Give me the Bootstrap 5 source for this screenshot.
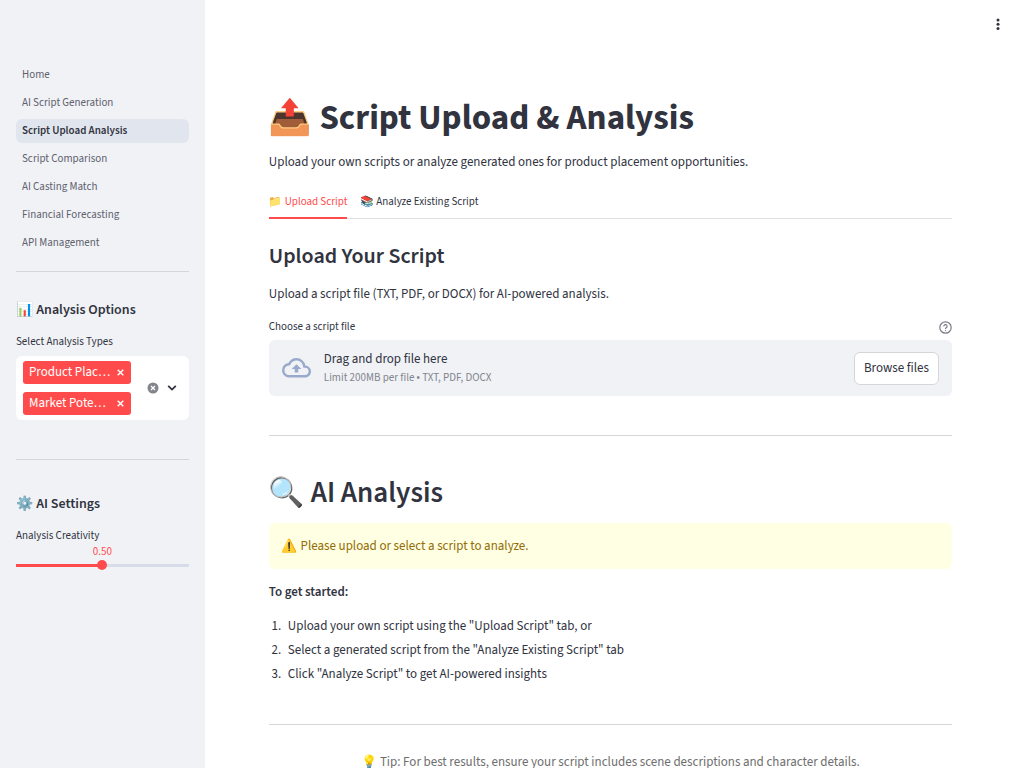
<!DOCTYPE html>
<html lang="en">
<head>
<meta charset="utf-8">
<meta name="viewport" content="width=device-width, initial-scale=1">
<title>Script Upload Analysis</title>
<link href="https://cdn.jsdelivr.net/npm/bootstrap@5.3.0/dist/css/bootstrap.min.css" rel="stylesheet">
<style>
  :root { --ink: #31333f; --red: #ff4b4b; --panel: #f0f2f6; --rule: #d6d6d9; }
  body { font-family: "Source Sans Pro", "Source Sans 3", "Noto Sans CJK SC", "Noto Color Emoji", sans-serif; font-size: 13px; line-height: 20px; color: var(--ink); background: #fff; }
  h1, h2, h3, p, ol { margin: 0; color: var(--ink); }
  hr { margin: 0; border-top: 1px solid var(--rule); opacity: 1; }

  .side-panel { width: 20%; background: var(--panel); padding: 63px 16px 16px; }
  .side-panel .nav { gap: 4px; margin-bottom: 16px; }
  .side-panel .nav-link { padding: 0 6px; border-radius: 6px; font-size: 11px; line-height: 24px; color: #5f616d; }
  .side-panel .nav-link.active { background: #e1e6ee; color: var(--ink); font-weight: 600; }
  .side-title { font-size: 14px; line-height: 24px; font-weight: 600; padding-top: 26px; margin-bottom: 10px; }
  .field-label { font-size: 11px; line-height: 20px; }
  .picker { background: #fff; border-radius: 6px; padding: 5px 12px 5px 7px; margin: 4px 0 39px; }
  .tag { background: var(--red); color: #fff; border-radius: 3px; width: 108px; height: 23px; padding: 0 6px; line-height: 23px; white-space: nowrap; }
  .bare { border: 0; background: none; padding: 0; color: inherit; display: flex; }
  .slider-value { color: var(--red); font-size: 11px; line-height: 11px; text-align: center; }
  .creativity { appearance: none; width: 100%; height: 10px; margin: 3px 0 0; display: block;
    background: linear-gradient(to right, var(--red) 50%, #d7dde8 50%) center / 100% 3px no-repeat; }
  .creativity::-webkit-slider-thumb { appearance: none; width: 10px; height: 10px; border-radius: 50%; background: var(--red); }

  .main-pane { overflow-y: auto; scrollbar-width: none; }
  .top-bar { padding: 16px 18px 0; height: 48px; }
  .main-col { padding: 48px 72px 32px 64px; }
  .page-title { font-size: 35px; line-height: 44px; font-weight: 700; margin-bottom: 12px; }
  .section-title { font-size: 22px; line-height: 28px; font-weight: 600; margin: 23px 0 14px; }
  .group-title { font-size: 29px; line-height: 36px; font-weight: 600; margin: 39px 0 12px; }
  .script-tabs { border-bottom: 1px solid #e0e0e3; gap: 13px; margin-top: 20px; }
  .script-tabs .nav-link { padding: 0 0 5px; border: 0; border-bottom: 2px solid transparent; border-radius: 0; margin-bottom: -1px; font-size: 11px; line-height: 20px; color: var(--ink); background: none; }
  .script-tabs .nav-link.active { color: var(--red); border-color: var(--red); background: none; }
  .upload-head { margin: 13px 0 3px; }
  .dropzone { background: var(--panel); border-radius: 6px; padding: 9px 13px; margin-bottom: 39px; }
  .cloud { margin-right: 13px; }
  .hint { font-size: 11px; line-height: 18px; color: #82848d; }
  .browse { background: #fff; border: 1px solid var(--rule); border-radius: 6px; color: var(--ink); line-height: 21px; padding: 5px 9px; }
  .warn { background: #ffffe3; color: #926c05; border-radius: 6px; padding: 13px; margin-bottom: 13px; }
  .steps { padding-left: 15px; margin: 14px 0 40px; }
  .steps li { margin-bottom: 4px; padding-left: 4px; }
  .tip { color: #6e6e6e; margin-top: 27px; }
</style>
</head>
<body>
<div class="d-flex vh-100 overflow-hidden">
  <aside class="side-panel flex-shrink-0">
    <nav class="nav flex-column" aria-label="Pages">
      <a class="nav-link" href="#">Home</a>
      <a class="nav-link" href="#">AI Script Generation</a>
      <a class="nav-link active" href="#" aria-current="page">Script Upload Analysis</a>
      <a class="nav-link" href="#">Script Comparison</a>
      <a class="nav-link" href="#">AI Casting Match</a>
      <a class="nav-link" href="#">Financial Forecasting</a>
      <a class="nav-link" href="#">API Management</a>
    </nav>
    <hr>
    <h3 class="side-title">📊 Analysis Options</h3>
    <div class="field-label">Select Analysis Types</div>
    <div class="picker d-flex align-items-center justify-content-between">
      <div class="d-flex flex-column gap-2">
        <div class="tag d-flex align-items-center justify-content-between"><span>Product Plac…</span><button class="bare" aria-label="Remove Product Placement"><svg width="9" height="9" viewBox="0 0 9 9" stroke="#fff" stroke-width="1.5"><path d="M1.700 1.700l5.600 5.600M7.300 1.700l-5.600 5.600"/></svg></button></div>
        <div class="tag d-flex align-items-center justify-content-between"><span>Market Pote…</span><button class="bare" aria-label="Remove Market Potential"><svg width="9" height="9" viewBox="0 0 9 9" stroke="#fff" stroke-width="1.5"><path d="M1.700 1.700l5.600 5.600M7.300 1.700l-5.600 5.600"/></svg></button></div>
      </div>
      <div class="d-flex gap-2 align-items-center">
        <button class="bare" aria-label="Clear all"><svg width="12" height="12" viewBox="0 0 12 12"><circle cx="6" cy="6" r="5.500" fill="#83858c"/><path d="M4 4l4 4M8 4l-4 4" stroke="#fff" stroke-width="1.300"/></svg></button>
        <button class="bare" aria-label="Open"><svg width="10" height="8" viewBox="0 0 10 8" fill="none" stroke="#31333f" stroke-width="1.800"><path d="M1.200 1.800L5 5.600l3.800-3.800"/></svg></button>
      </div>
    </div>
    <hr>
    <h3 class="side-title pt-4 mt-2">⚙️ AI Settings</h3>
    <label class="field-label d-block" for="creativity">Analysis Creativity</label>
    <div class="slider-value">0.50</div>
    <input class="creativity" id="creativity" type="range" min="0" max="1" step="0.01" value="0.5">
  </aside>

  <main class="main-pane flex-grow-1">
    <div class="top-bar d-flex justify-content-end align-items-start">
      <button class="bare" aria-label="Main menu"><svg width="16" height="16" viewBox="0 0 16 16" fill="#31333f"><circle cx="8" cy="4" r="1.500"/><circle cx="8" cy="8.200" r="1.500"/><circle cx="8" cy="12.400" r="1.500"/></svg></button>
    </div>
    <div class="main-col">
      <h1 class="page-title">📤 Script Upload &amp; Analysis</h1>
      <p>Upload your own scripts or analyze generated ones for product placement opportunities.</p>

      <div class="nav script-tabs" role="tablist">
        <button class="nav-link active" role="tab" aria-selected="true">📁 Upload Script</button>
        <button class="nav-link" role="tab" aria-selected="false">📚 Analyze Existing Script</button>
      </div>

      <h2 class="section-title">Upload Your Script</h2>
      <p>Upload a script file (TXT, PDF, or DOCX) for AI-powered analysis.</p>
      <div class="upload-head d-flex justify-content-between align-items-center">
        <label class="field-label" for="browse">Choose a script file</label>
        <button class="bare" aria-label="Help"><svg width="13" height="13" viewBox="0 0 24 24" fill="none" stroke="#7b7d86" stroke-width="2.200" stroke-linecap="round" stroke-linejoin="round"><circle cx="12" cy="12" r="10.500"/><path d="M9 9a3 3 0 0 1 5.900 1c0 2-2.900 2.800-2.900 4M12 17.500v.1"/></svg></button>
      </div>
      <div class="dropzone d-flex align-items-center">
        <svg class="cloud flex-shrink-0" width="29" height="29" viewBox="0 0.6 24 24" fill="#98a9cb" aria-hidden="true"><path d="M19.350 10.040A7.490 7.490 0 0 0 12 4C9.110 4 6.600 5.640 5.350 8.040A5.994 5.994 0 0 0 0 14c0 3.310 2.690 6 6 6h13c2.760 0 5-2.240 5-5 0-2.640-2.050-4.780-4.650-4.960zM19 18H6c-2.210 0-4-1.790-4-4 0-2.050 1.530-3.760 3.560-3.970l1.070-.11.5-.95A5.469 5.469 0 0 1 12 6c2.620 0 4.880 1.860 5.390 4.430l.3 1.500 1.530.11A2.980 2.980 0 0 1 22 15c0 1.650-1.350 3-3 3zM8 13h2.550v3h2.900v-3H16l-4-4z"/></svg>
        <div class="flex-grow-1">
          <div>Drag and drop file here</div>
          <div class="hint">Limit 200MB per file • TXT, PDF, DOCX</div>
        </div>
        <button class="browse" id="browse" type="button">Browse files</button>
      </div>
      <hr>

      <h2 class="group-title">🔍 AI Analysis</h2>
      <div class="warn" role="alert">⚠️ Please upload or select a script to analyze.</div>
      <p class="fw-semibold">To get started:</p>
      <ol class="steps">
        <li>Upload your own script using the "Upload Script" tab, or</li>
        <li>Select a generated script from the "Analyze Existing Script" tab</li>
        <li>Click "Analyze Script" to get AI-powered insights</li>
      </ol>
      <hr>
      <p class="tip text-center">💡 Tip: For best results, ensure your script includes scene descriptions and character details.</p>
    </div>
  </main>
</div>
<script src="https://cdn.jsdelivr.net/npm/bootstrap@5.3.0/dist/js/bootstrap.bundle.min.js"></script>
</body>
</html>
